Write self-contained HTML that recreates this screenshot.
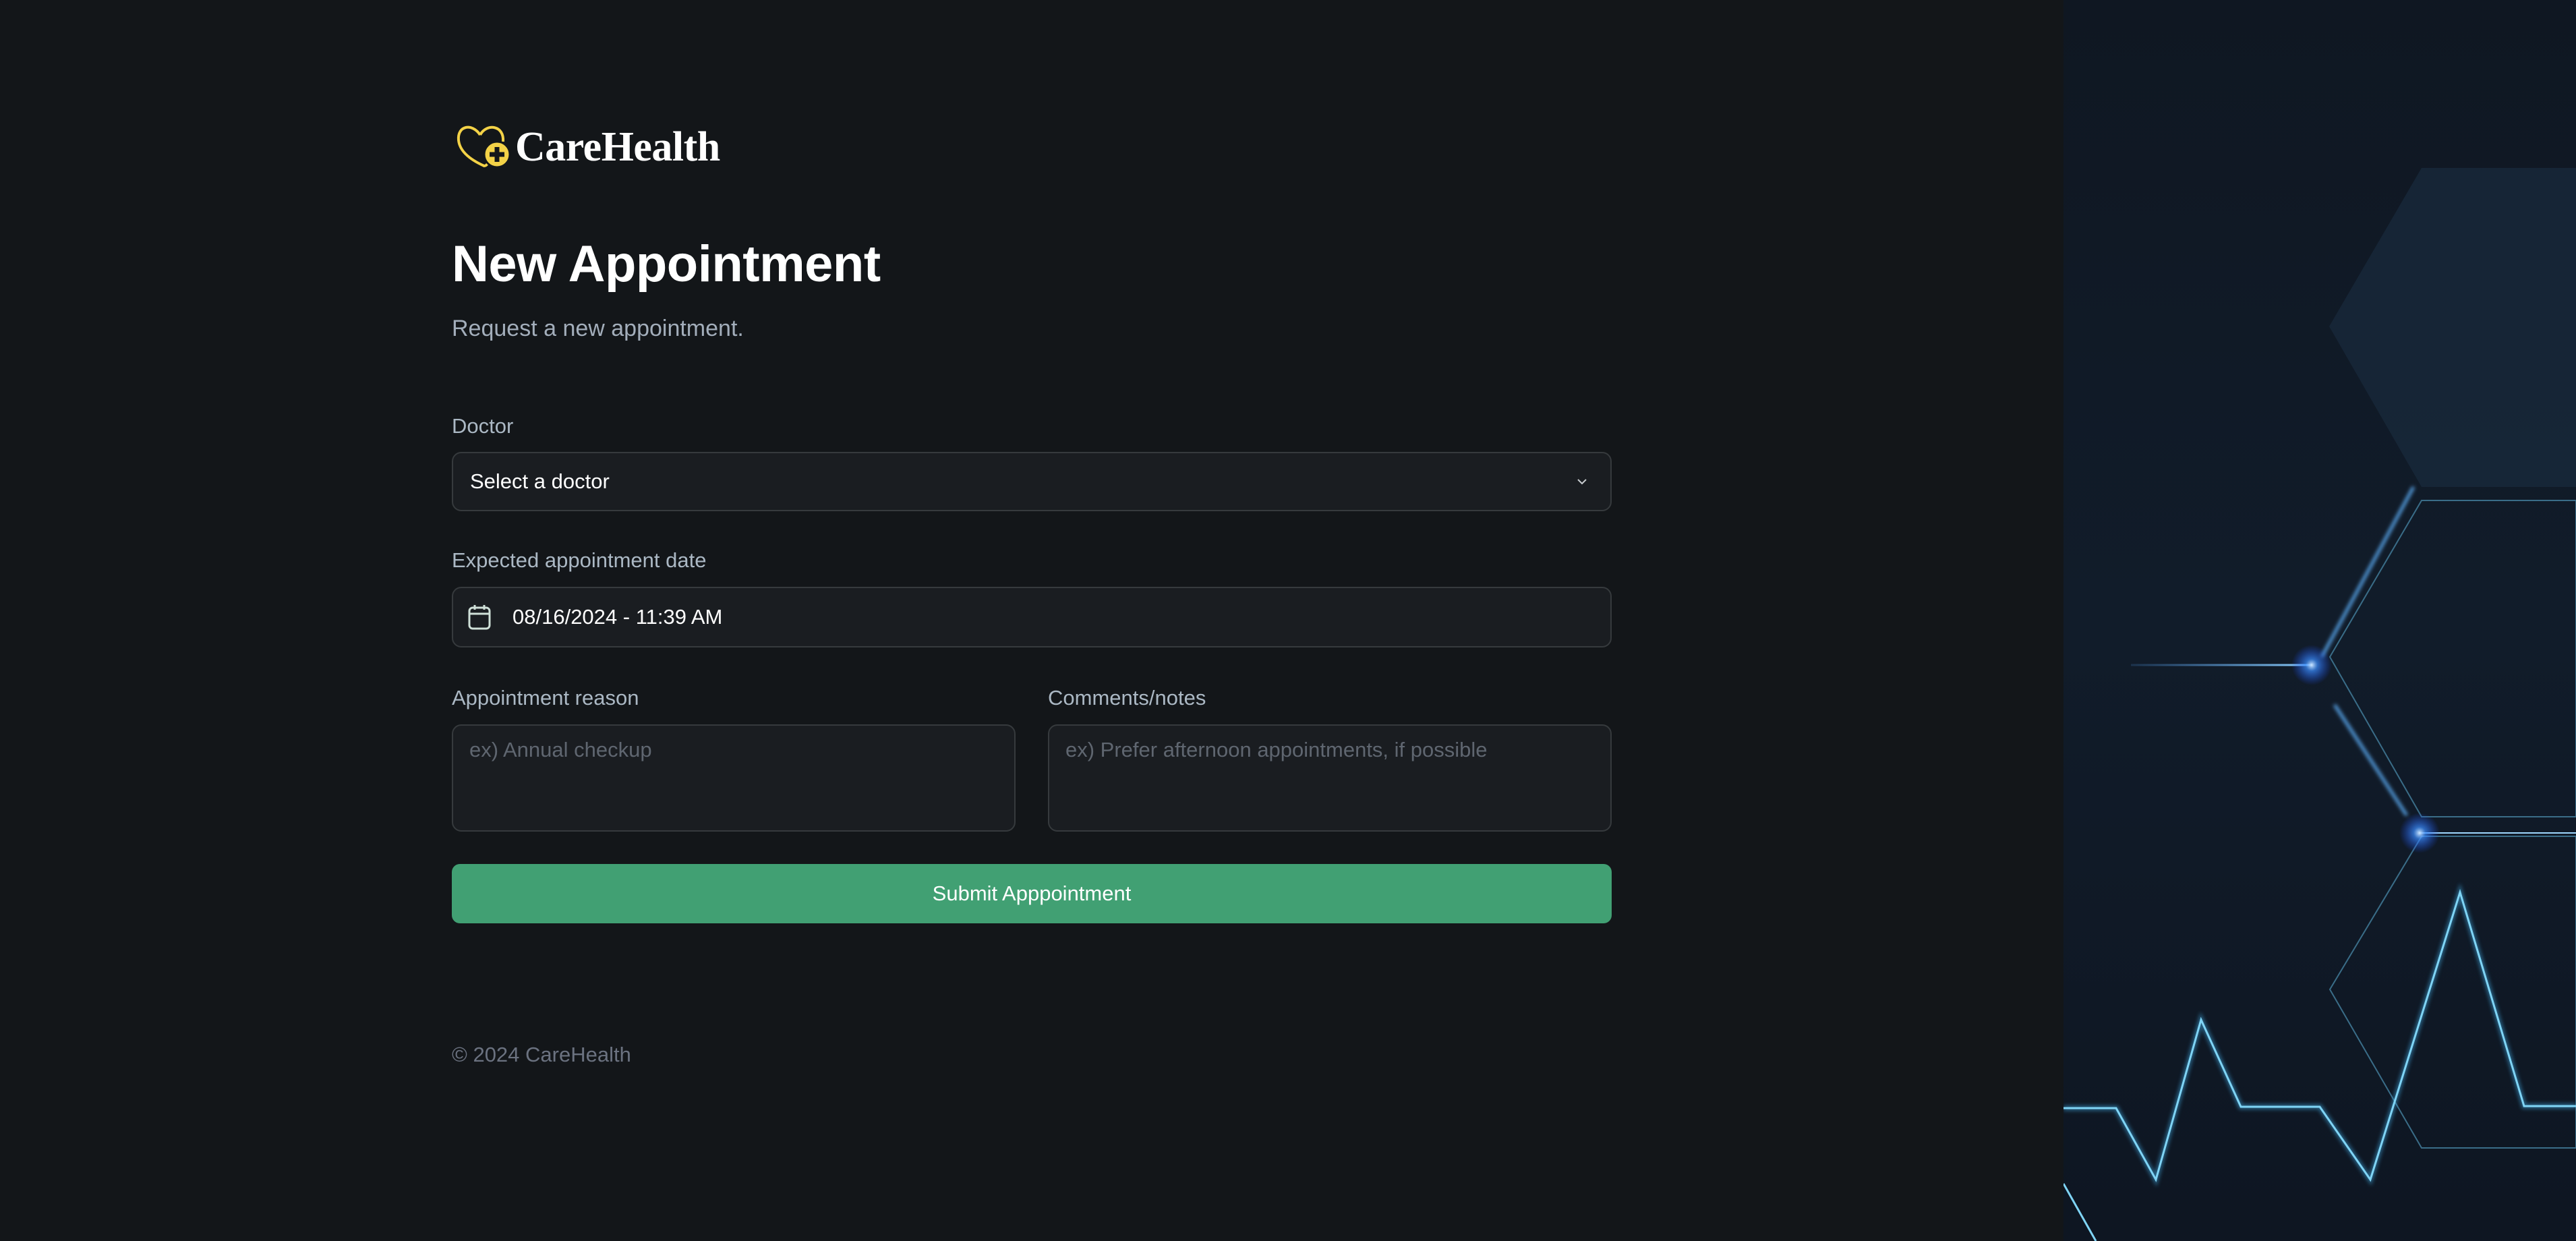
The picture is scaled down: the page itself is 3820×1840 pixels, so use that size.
<!DOCTYPE html>
<html><head><meta charset="utf-8"><style>
html,body{margin:0;padding:0;width:3820px;height:1840px;overflow:hidden;background:#131619;font-family:"Liberation Sans",sans-serif}
.abs{position:absolute}
.lbl{position:absolute;font-size:31px;color:#abb8c4;line-height:1}
.box{position:absolute;background:#1a1d21;border:2px solid #363a3d;border-radius:14px;box-sizing:border-box}
</style></head><body>
<svg class="abs" style="left:670px;top:180px" width="100" height="80" viewBox="670 180 100 80">
<path d="M712 200 C700 182 678 186 680 208 C682 226 700 238 718 246 C722 246 726 240 722 236" fill="none" stroke="#f3d247" stroke-width="4"/>
<path d="M712 200 C722 182 748 186 746 210" fill="none" stroke="#f3d247" stroke-width="4"/>
<circle cx="737" cy="229" r="19" fill="#f3d247" stroke="#131619" stroke-width="3"/>
<path d="M737 218 V240 M726 229 H748" stroke="#131619" stroke-width="7"/>
</svg>
<div class="abs" style="left:764px;top:182px;font-family:'Liberation Serif',serif;font-weight:bold;font-size:62px;color:#fff;letter-spacing:-0.5px;line-height:72px">CareHealth</div>
<div class="abs" style="left:670px;top:346px;font-size:76px;font-weight:bold;color:#fff;line-height:92px;letter-spacing:-0.5px">New Appointment</div>
<div class="abs" style="left:670px;top:465px;font-size:34px;color:#a3aebb;line-height:44px">Request a new appointment.</div>

<div class="lbl" style="left:670px;top:616px">Doctor</div>
<div class="box" style="left:670px;top:670px;width:1720px;height:88px"></div>
<div class="abs" style="left:697px;top:697px;font-size:31px;color:#fff;line-height:34px">Select a doctor</div>
<svg class="abs" style="left:2336px;top:704px" width="20" height="20" viewBox="0 0 20 20"><path d="M4 7 L10 13 L16 7" fill="none" stroke="#c8ccd0" stroke-width="2"/></svg>

<div class="lbl" style="left:670px;top:815px">Expected appointment date</div>
<div class="box" style="left:670px;top:870px;width:1720px;height:90px"></div>
<svg class="abs" style="left:692px;top:894px" width="40" height="42" viewBox="0 0 40 42"><rect x="4" y="7" width="30" height="31" rx="5" fill="none" stroke="#cfe0d8" stroke-width="3"/><path d="M4 16 H34 M12 3 V10 M26 3 V10" stroke="#cfe0d8" stroke-width="3"/></svg>
<div class="abs" style="left:760px;top:898px;font-size:31px;color:#fff;line-height:34px">08/16/2024 - 11:39 AM</div>

<div class="lbl" style="left:670px;top:1019px">Appointment reason</div>
<div class="lbl" style="left:1554px;top:1019px">Comments/notes</div>
<div class="box" style="left:670px;top:1074px;width:836px;height:159px"></div>
<div class="box" style="left:1554px;top:1074px;width:836px;height:159px"></div>
<div class="abs" style="left:696px;top:1095px;font-size:31px;color:#5f6670;line-height:34px">ex) Annual checkup</div>
<div class="abs" style="left:1580px;top:1095px;font-size:31px;color:#5f6670;line-height:34px">ex) Prefer afternoon appointments, if possible</div>

<div class="abs" style="left:670px;top:1281px;width:1720px;height:88px;background:#41a073;border-radius:12px;color:#fff;font-size:31px;line-height:88px;text-align:center">Submit Apppointment</div>

<div class="abs" style="left:670px;top:1547px;font-size:31px;color:#6b7280;line-height:34px">© 2024 CareHealth</div>

<svg class="abs" style="left:3060px;top:0" width="760" height="1840" viewBox="3060 0 760 1840">
<defs>
<linearGradient id="bg" x1="0" y1="0" x2="0" y2="1"><stop offset="0" stop-color="#0f1722"/><stop offset="0.5" stop-color="#111c2a"/><stop offset="1" stop-color="#0e1622"/></linearGradient>
<radialGradient id="gl"><stop offset="0" stop-color="#cfe8ff"/><stop offset="0.3" stop-color="#3a8cff" stop-opacity="0.7"/><stop offset="1" stop-color="#1a4cff" stop-opacity="0"/></radialGradient>
<linearGradient id="hl" gradientUnits="userSpaceOnUse" x1="3108" y1="0" x2="3428" y2="0"><stop offset="0" stop-color="#4aa0ff" stop-opacity="0"/><stop offset="1" stop-color="#8ed0ff"/></linearGradient>
<filter id="b"><feGaussianBlur stdDeviation="3"/></filter>
</defs>
<rect x="3060" y="0" width="760" height="1840" fill="url(#bg)"/>
<polygon points="3454,484 3591,249 3820,249 3820,722 3591,722" fill="#17283a" opacity="0.85"/>
<polygon points="3455,974 3591,742 3820,742 3820,1211 3591,1211" fill="none" stroke="#3a6d88" stroke-width="2"/>
<polygon points="3455,1467 3591,1240 3820,1240 3820,1702 3591,1702" fill="none" stroke="#3a6d88" stroke-width="2"/>
<line x1="3108" y1="986" x2="3428" y2="986" stroke="url(#hl)" stroke-width="8" filter="url(#b)"/>
<line x1="3160" y1="986" x2="3428" y2="986" stroke="url(#hl)" stroke-width="3"/>
<line x1="3588" y1="1235" x2="3820" y2="1235" stroke="#6fc0ff" stroke-width="6" filter="url(#b)"/>
<line x1="3588" y1="1235" x2="3820" y2="1235" stroke="#9fd8ff" stroke-width="2"/>
<line x1="3579" y1="722" x2="3443" y2="974" stroke="#5fb4ff" stroke-width="4" filter="url(#b)"/>
<line x1="3462" y1="1045" x2="3569" y2="1209" stroke="#5fb4ff" stroke-width="4" filter="url(#b)"/>
<circle cx="3428" cy="986" r="30" fill="url(#gl)"/>
<circle cx="3588" cy="1235" r="30" fill="url(#gl)"/>
<polyline points="3060,1643 3138,1643 3197,1749 3264,1512 3323,1641 3440,1641 3515,1749 3648,1323 3743,1640 3820,1640" fill="none" stroke="#3fa8e0" stroke-width="8" opacity="0.5" filter="url(#b)"/>
<polyline points="3060,1643 3138,1643 3197,1749 3264,1512 3323,1641 3440,1641 3515,1749 3648,1323 3743,1640 3820,1640" fill="none" stroke="#7fd4f5" stroke-width="3"/>
<line x1="3060" y1="1755" x2="3108" y2="1840" stroke="#7fd4f5" stroke-width="3"/>
</svg>
</body></html>
